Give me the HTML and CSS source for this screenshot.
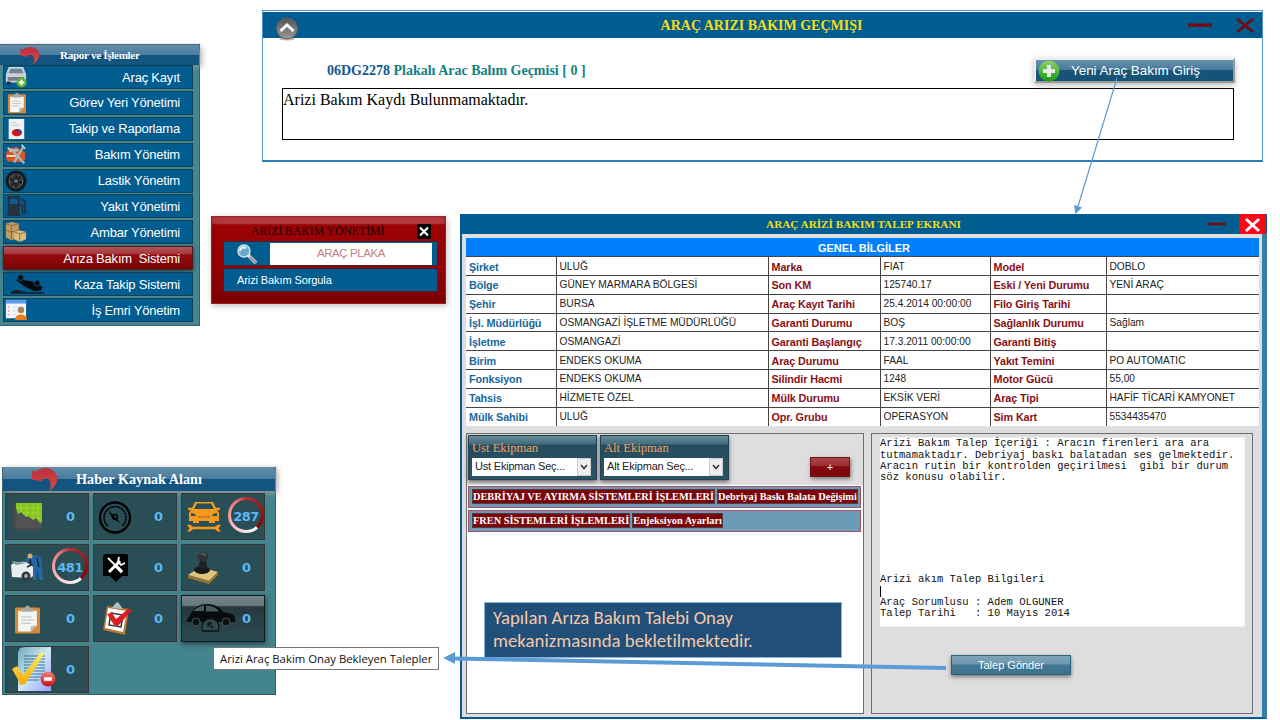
FILE: index.html
```html
<!DOCTYPE html>
<html lang="tr">
<head>
<meta charset="utf-8">
<title>Araç Arızi Bakım</title>
<link rel="stylesheet" href="styles.css">
</head>
<body>
<svg class="defs" width="0" height="0">
  <defs>
    <linearGradient id="back" x1="0" y1="0" x2="0" y2="1"><stop offset="0" stop-color="#b8303c"/><stop offset="1" stop-color="#e04848"/></linearGradient>
    <linearGradient id="gold" x1="0" y1="0" x2="0" y2="1"><stop offset="0" stop-color="#fff06a"/><stop offset="1" stop-color="#f5a800"/></linearGradient>
    <linearGradient id="doc" x1="0" y1="0" x2="1" y2="1"><stop offset="0" stop-color="#6fa6bd"/><stop offset=".5" stop-color="#cfe8f2"/><stop offset="1" stop-color="#9aa0ff"/></linearGradient>
    <linearGradient id="green" x1="0" y1="0" x2="0" y2="1"><stop offset="0" stop-color="#8fd070"/><stop offset="1" stop-color="#169c10"/></linearGradient>
    <linearGradient id="gray" x1="0" y1="0" x2="0" y2="1"><stop offset="0" stop-color="#555"/><stop offset="1" stop-color="#999"/></linearGradient>
    <linearGradient id="redball" x1="0" y1="0" x2="0" y2="1"><stop offset="0" stop-color="#f08080"/><stop offset="1" stop-color="#c80f14"/></linearGradient>
    <symbol id="undo" viewBox="0 0 25 22"><path d="M0 11V2l3 1.500C9-1 16-1 21 3c5 5 5 12-4 19 2-6 1-12-4-12-2 0-3 0-4 1l2 2z" fill="url(#back)"/></symbol>
    <symbol id="clip" viewBox="0 0 24 28"><rect x="0" y="3" width="24" height="25" rx="1.500" fill="#d58936"/><path d="M3 6h18v14l-6 6H3z" fill="#f5f5f3"/><path d="m21 20-6 6v-5z" fill="#bbb"/><path d="M6 12h10M6 15h12M6 18h9" stroke="#bbb"/><path d="M6 7V4h3q3-6 6 0h3v3z" fill="#aaa9a2"/></symbol>
  </defs>
</svg>

<nav class="menu">
  <header class="menu-head glass"><svg class="undo-s"><use href="#undo"/></svg><span>Rapor ve İşlemler</span></header>
  <ul class="menu-list">
    <li><svg class="mi" viewBox="0 0 24 24"><path d="m1 9 3-8h16l3 8v9H1z" fill="#c9d1d6"/><path d="m4 8 2-5h12l2 5z" fill="#71838e"/><path d="M3 12h18v4H3z" fill="#737e86"/><path d="M2 17h4v3H2z" fill="#222"/><circle cx="18" cy="18" r="5.500" fill="#5cb52a"/><path d="M18 15v6M15 18h6" stroke="#fff" stroke-width="2"/></svg><span>Araç Kayıt</span></li>
    <li><svg class="mi" viewBox="0 0 24 24"><use href="#clip" x="3" y="0" width="20" height="23.500"/></svg><span>Görev Yeri Yönetimi</span></li>
    <li><svg class="mi" viewBox="0 0 24 24"><path d="M4 1h17v22H4z" fill="#eef0f2"/><path d="M7 5h5M7 8h8" stroke="#c5c9cc"/><ellipse cx="13" cy="16" rx="5.500" ry="4" fill="#d3171f"/><path d="M13 16V12q5 0 5.500 4z" fill="#334c94"/></svg><span>Takip ve Raporlama</span></li>
    <li><svg class="mi" viewBox="0 0 24 24"><path d="m1 11 3-6 9-2 5 4 4 2v8l-6 3-13-1-2-4z" fill="#d9532c"/><path d="m5 9 1-3 7-1 3 3z" fill="#9ec2cd"/><path d="M2 13h10" stroke="#ffe0c0" stroke-width="2"/><path d="m6 5 15 16M20 3 10 20" stroke="#a9b6af" stroke-width="2.600"/><path d="m3 4 4 4M18 1l4 4" stroke="#c5ccc8" stroke-width="2"/></svg><span>Bakım Yönetim</span></li>
    <li><svg class="mi" viewBox="0 0 24 24"><circle cx="12" cy="12" r="11.500" fill="#181b1e"/><circle cx="12" cy="12" r="7.500" fill="#33383c" stroke="#646b70"/><path d="M12 5v14M5.500 10l13 4M7 17 17 7" stroke="#111" stroke-width="1.500"/><circle cx="12" cy="12" r="2" fill="#777"/></svg><span>Lastik Yönetim</span></li>
    <li><svg class="mi" viewBox="0 0 24 24"><path d="M3 1h13v20h1v2H2v-2h1z" fill="#25313b"/><path d="M5 4h9v6H5z" fill="#0b5b8d"/><path d="M16 11h3v8q2 3 3-1V8l-4-4" fill="none" stroke="#25313b" stroke-width="2"/></svg><span>Yakıt Yönetimi</span></li>
    <li><svg class="mi" viewBox="0 0 24 24"><path d="m1 3 6-2 8 2v15l-8 3-6-3z" fill="#c09a60"/><path d="m1 3 6 2 8-2M7 5v15M1 10l6 2 8-2" fill="none" stroke="#8d6b3b"/><path d="m10 12 6-2 7 2v8l-7 3-6-3z" fill="#dcba80"/><path d="m10 12 6 2 7-2M16 14v9" fill="none" stroke="#947040"/></svg><span>Ambar Yönetimi</span></li>
    <li class="active"><span>Arıza Bakım&nbsp; Sistemi</span></li>
    <li><svg class="mi wide" viewBox="0 0 40 24"><path d="m8 8 4-4 5 4 8 1 12 6-2 4-7 1-10-5z" fill="#07090b"/><circle cx="13" cy="5" r="3.300" fill="#07090b" stroke="#0b5b8d"/><circle cx="31" cy="11" r="3.300" fill="#07090b" stroke="#0b5b8d"/><path d="M2 21q7-5 12-1l7 1h18v1.500H2z" fill="#10202c"/></svg><span>Kaza Takip Sistemi</span></li>
    <li><svg class="mi" viewBox="0 0 24 24"><path d="M1 1h22v20H1z" fill="#f5f7fc"/><path d="M1 1h22v4H1z" fill="#5b9bea"/><path d="M4 8v12" stroke="#e6a6d0" stroke-width="2" stroke-dasharray="2 2"/><path d="M8 9h12M8 13h7M8 17h4" stroke="#d4d9e3"/><circle cx="17.500" cy="12" r="3.500" fill="#a98260"/><path d="M11 23q0-6 6.500-6t6.500 6z" fill="#ee7a1b"/></svg><span>İş Emri Yönetim</span></li>
  </ul>
</nav>

<section class="popup">
  <header class="popup-head"><h2>ARİZİ BAKIM YÖNETİMİ</h2><svg class="popup-x" viewBox="0 0 14 15"><rect width="14" height="15" fill="#000"/><path d="m3 3.500 8 8m0-8-8 8" stroke="#fff" stroke-width="2.200"/></svg></header>
  <div class="search"><svg class="lens" viewBox="0 0 22 20"><path d="m12 11 8 8" stroke="#d5d9d7" stroke-width="3.500"/><path d="m14 13 6 6" stroke="#687780" stroke-width="1.200"/><circle cx="8" cy="7" r="6" fill="#6ca7ca" stroke="#d7e5e8" stroke-width="1.500"/><path d="M4 7q1-5 6-3" fill="none" stroke="#e5fbff" stroke-width="2"/></svg><div class="plate">ARAÇ PLAKA</div></div>
  <div class="query">Arizi Bakım Sorgula</div>
</section>

<section class="news">
  <header class="news-head glass"><svg class="undo-l"><use href="#undo"/></svg><span>Haber Kaynak Alanı</span></header>
  <div class="tiles">
    <div class="tile"><svg class="ti" viewBox="0 0 44 43"><path d="M10 8h26v25H10z" fill="#86c41c"/><path d="M10 13h26M10 18h26M10 23h26M15 8v24M21 8v24M27 8v24M32 8v24" stroke="#a5dc48" stroke-width=".7"/><path d="m10 13 2 6 3-2 5 5 2-1 5 4 3-2 4 5 2-1v8H10z" fill="#505253"/><path d="M9 8v26h27M6 9h3M6 15h3M6 21h3M6 27h3M15 34v3M21 34v3M28 34v3" fill="none" stroke="#4a4a4b" stroke-width="2"/></svg><b>0</b></div>
    <div class="tile"><svg class="ti" viewBox="0 0 44 43"><circle cx="21" cy="22.500" r="15" fill="none" stroke="#000" stroke-width="2.400"/><path d="M14 31a11 11 0 1 1 14 0" fill="none" stroke="#000" stroke-width="1.600" stroke-dasharray="2.500 .5"/><circle cx="21" cy="22" r="2.500" fill="none" stroke="#000" stroke-width="1.300"/><path d="m14 15 13 13-8-4z" fill="#000"/></svg><b>0</b></div>
    <div class="tile"><svg class="ti" viewBox="0 0 44 43"><path d="m9 15 4-8h18l4 8 2 3v8h-4v2h-6v-2H17v2h-6v-2H7v-8z" fill="#f59a1d"/><path d="m12 14 3-5.500h14l3 5.500z" fill="#294f56"/><path d="M6 14h4M34 14h4" stroke="#f59a1d" stroke-width="2.500"/><path d="M9 18q4 0 5 3H9zM35 18q-4 0-5 3h5z" fill="#294f56"/><path d="M16 22h12" stroke="#a6651a"/><path d="M9 33h26" stroke="#f59a1d" stroke-width="2.500"/><path d="M5 29.500q6 0 6 3.500t-6 4l2.500-3.500zM39 29.500q-6 0-6 3.500t6 4l-2.500-3.500z" fill="#f59a1d"/></svg><div class="ring"><b>287</b></div></div>
    <div class="tile"><svg class="ti" viewBox="0 0 44 43"><path d="M5 19q5-4 15-3l9 6v7l-5 3-18-1z" fill="#e9edf0"/><path d="m5 15 5 4 11-2-7-1z" fill="#839aa5"/><circle cx="20" cy="30" r="4.500" fill="#30373c"/><circle cx="20" cy="30" r="2" fill="#aaa"/><path d="m19 13 6-3 5-1 5 3 1 9 1 13h-3l-3-10-1 10h-3V21l-1-6-6 1z" fill="#2267a6"/><circle cx="24" cy="10" r="2.500" fill="#d5aa79"/><path d="m24 13 1 6-4 2M31 12l2 9" fill="none" stroke="#17283c" stroke-width="1.500"/></svg><div class="ring"><b>481</b></div></div>
    <div class="tile"><svg class="ti" viewBox="0 0 44 43"><path d="M11 8h21q2 0 2 2v20h-6l-6 6-6-6H9V10z" fill="#000"/><path d="m14 12 14 14" stroke="#fff" stroke-width="1.800"/><path d="m22 20 6 6" stroke="#fff" stroke-width="3.200"/><path d="M26 15 15 26" stroke="#fff" stroke-width="3"/><path d="m25 11-1 5 3 3 4-2" stroke="#fff" stroke-width="1.800" fill="none"/></svg><b>0</b></div>
    <div class="tile"><svg class="ti" viewBox="0 0 44 43"><path d="m6 29 12-8 18 5-9 9z" fill="#dec37d"/><path d="m6 29 21 6v3L6 32zM27 35l9-9v3l-9 9z" fill="#9a7431"/><ellipse cx="20" cy="24" rx="8" ry="4" fill="#171b1d"/><path d="m16 22 3-10h5l1 11z" fill="#222"/><ellipse cx="21" cy="11" rx="5.500" ry="4.500" fill="#303436"/><path d="M19 8q4-1 5 2" stroke="#788086" fill="none"/></svg><b>0</b></div>
    <div class="tile"><svg class="ti" viewBox="0 0 44 43"><use href="#clip" x="9" y="7" width="25" height="30"/></svg><b>0</b></div>
    <div class="tile"><svg class="ti" viewBox="0 0 44 43"><path d="m13 9 22 3-4 26-22-5z" fill="#b87837"/><path d="m14 11 19 3-4 21-18-4z" fill="#fff"/><path d="m17 16 12 2-2 12-12-2z" fill="none" stroke="#333" stroke-width="1.500"/><path d="m18 11 3-4q3-4 5 1l3 4z" fill="#b7bec1"/><path d="m13 17 5-1 4 6 12-10 4 1-14 16-4-1z" fill="#db1c22"/></svg><b>0</b></div>
    <div class="tile hover"><svg class="car" viewBox="0 0 52 32"><path d="m1 17 4-7q5-9 16-9 11 0 16 8l9 2q4 2 3 8h-4q-5-6-10 0H15q-4-6-9 0H1z" fill="#080c0e"/><path d="m7 8q5-5 11-5.500V8zm13-5.500q9 0 13 6H20z" fill="#4b5c60"/><circle cx="10" cy="19" r="4" fill="#0c1112" stroke="#445457"/><circle cx="40" cy="19" r="4" fill="#0c1112" stroke="#445457"/><path d="M17 28a8.500 8.500 0 1 1 15 0z" fill="#304b50" stroke="#0b1113" stroke-width="1.300"/><path d="m22 20 5 5m-5-5h4m-4 0v4" stroke="#0b1113" stroke-width="1.300"/></svg><b>0</b></div>
    <div class="tile"><svg class="check" viewBox="0 0 46 45"><path d="m14 1 5-1h26v44H12V5z" fill="url(#doc)"/><path d="M18 9h21M18 12h21M18 15h21M18 18h21M18 21h21M18 24h21M18 27h21M18 30h17M18 33h15" stroke="#35749c"/><path d="m6 22 5-3 6 9L35 5l3 2-19 30-4 1z" fill="url(#gold)"/><circle cx="42" cy="32" r="7.500" fill="url(#redball)"/><path d="M38 32h8" stroke="#fff" stroke-width="3.500"/></svg><b>0</b></div>
  </div>
</section>

<section class="history">
  <header class="history-head">
    <svg class="up" viewBox="0 0 24 24"><ellipse cx="12" cy="22" rx="8" ry="1.500" fill="#bbb"/><circle cx="12" cy="11.500" r="10.500" fill="url(#gray)" stroke="#626262"/><path d="m5.500 14 6.500-6 6.500 6" fill="none" stroke="#fff" stroke-width="3"/></svg>
    <h1>ARAÇ ARIZI BAKIM GEÇMIŞI</h1>
    <svg class="hwin" viewBox="0 0 70 20"><path d="M2 10h24" stroke="#7c0505" stroke-width="3"/><path d="m51 4 16 13m0-13L51 17" stroke="#7c0505" stroke-width="2.500"/></svg>
  </header>
  <div class="history-bar"><p><span class="plate-no">06DG2278</span> Plakalı Arac Balım Geçmisi [ 0 ]</p>
    <button class="new-btn"><svg viewBox="0 0 22 22"><circle cx="11" cy="11" r="10.500" fill="url(#green)"/><path d="M11 5v12M5 11h12" stroke="#e8ece6" stroke-width="4"/></svg><span>Yeni Araç Bakım Giriş</span></button></div>
  <div class="record">Arizi Bakım Kaydı Bulunmamaktadır.</div>
</section>

<section class="request">
  <header class="request-head"><h1>ARAÇ ARİZİ BAKIM TALEP EKRANI</h1>
    <svg class="rmin" viewBox="0 0 20 4"><path d="M1 2h18" stroke="#780909" stroke-width="2.500"/></svg>
    <svg class="rclose" viewBox="0 0 27 20"><rect width="27" height="20" fill="#fb0716"/><path d="m7 5 13 12m0-12L7 17" stroke="#fff" stroke-width="3"/></svg></header>
  <div class="request-body">
    <table class="info">
      <colgroup><col class="c1"><col class="c2"><col class="c3"><col class="c4"><col class="c5"><col class="c6"></colgroup>
      <tr class="cap"><th colspan="6">GENEL BİLGİLER</th></tr>
      <tr><th>Şirket</th><td>ULUĞ</td><th>Marka</th><td>FIAT</td><th>Model</th><td>DOBLO</td></tr>
      <tr><th>Bölge</th><td>GÜNEY MARMARA BÖLGESİ</td><th>Son KM</th><td>125740.17</td><th>Eski / Yeni Durumu</th><td>YENİ ARAÇ</td></tr>
      <tr><th>Şehir</th><td>BURSA</td><th>Araç Kayıt Tarihi</th><td>25.4.2014 00:00:00</td><th>Filo Giriş Tarihi</th><td></td></tr>
      <tr><th>İşl. Müdürlüğü</th><td>OSMANGAZİ İŞLETME MÜDÜRLÜĞÜ</td><th>Garanti Durumu</th><td>BOŞ</td><th>Sağlanlık Durumu</th><td>Sağlam</td></tr>
      <tr><th>İşletme</th><td>OSMANGAZİ</td><th>Garanti Başlangıç</th><td>17.3.2011 00:00:00</td><th>Garanti Bitiş</th><td></td></tr>
      <tr><th>Birim</th><td>ENDEKS OKUMA</td><th>Araç Durumu</th><td>FAAL</td><th>Yakıt Temini</th><td>PO AUTOMATIC</td></tr>
      <tr><th>Fonksiyon</th><td>ENDEKS OKUMA</td><th>Silindir Hacmi</th><td>1248</td><th>Motor Gücü</th><td>55,00</td></tr>
      <tr><th>Tahsis</th><td>HİZMETE ÖZEL</td><th>Mülk Durumu</th><td>EKSİK VERİ</td><th>Araç Tipi</th><td>HAFİF TİCARİ KAMYONET</td></tr>
      <tr><th>Mülk Sahibi</th><td>ULUĞ</td><th>Opr. Grubu</th><td>OPERASYON</td><th>Sim Kart</th><td>5534435470</td></tr>
    </table>
    <div class="panes">
      <div class="equip">
        <div class="pickers">
          <div class="picker"><label>Ust Ekipman</label><div class="select"><span>Ust Ekipman Seç...</span><i><svg viewBox="0 0 8 6"><path d="m1 1 3 3.500L7 1" fill="none" stroke="#333" stroke-width="1.500"/></svg></i></div></div>
          <div class="picker"><label>Alt Ekipman</label><div class="select"><span>Alt Ekipman Seç...</span><i><svg viewBox="0 0 8 6"><path d="m1 1 3 3.500L7 1" fill="none" stroke="#333" stroke-width="1.500"/></svg></i></div></div>
          <button class="add">+</button>
        </div>
        <div class="jobs">
          <div class="job"><b>DEBRİYAJ VE AYIRMA SİSTEMLERİ İŞLEMLERİ</b><b>Debriyaj Baskı Balata Değişimi</b></div>
          <div class="job"><b>FREN SİSTEMLERİ İŞLEMLERİ</b><b>Enjeksiyon Ayarları</b></div>
        </div>
        <div class="note">Yapılan Arıza Bakım Talebi Onay<br>mekanizmasında bekletilmektedir.</div>
      </div>
      <div class="detail">
        <pre class="memo">Arizi Bakım Talep İçeriği : Aracın firenleri ara ara
tutmamaktadır. Debriyaj baskı balatadan ses gelmektedir.
Aracın rutin bir kontrolden geçirilmesi  gibi bir durum
söz konusu olabilir.








Arizi akım Talep Bilgileri
<span class="caret"></span>
Araç Sorumlusu : Adem OLGUNER
Talep Tarihi   : 10 Mayıs 2014</pre>
        <button class="send">Talep Gönder</button>
      </div>
    </div>
  </div>
</section>

<div class="tooltip">Arizi Araç Bakim Onay Bekleyen Talepler</div>
<svg class="arrows" viewBox="0 0 1280 720"><path d="M1117 78 1077.500 208" stroke="#5b9bd5" stroke-width="1.200"/><path d="m1074 205 8 2.500-6.500 6.500z" fill="#5b9bd5"/><path d="M946 668 453 658.500" stroke="#5b9bd5" stroke-width="4"/><path d="m443 658 12-6v12z" fill="#5b9bd5"/></svg>
</body>
</html>
```
FILE: styles.css
```css
* { box-sizing: border-box; }
body { margin: 0; width: 1280px; height: 720px; position: relative; overflow: hidden; background: #fff; font-family: "Liberation Sans", Arial, sans-serif; }
h1, h2, p, ul, pre { margin: 0; padding: 0; }
button { font-family: inherit; padding: 0; }
svg { display: block; flex: none; }
.defs { position: absolute; }
.glass { background: linear-gradient(#638eab 0, #4a7c9e 48%, #13537f 50%, #145580 100%); box-shadow: 2px 2px 6px #999; }

/* left menu */
.menu { position: absolute; left: 0; top: 44px; width: 200px; height: 282px; background: #44858e; border: 1px solid #365f6a; border-left: 0; }
.menu-head { height: 20px; display: flex; align-items: center; color: #fff; font: bold 11.200px "Liberation Serif", serif; letter-spacing: -.38px; padding-left: 20px; }
.menu-head span { letter-spacing: -.35px; }
.undo-s { width: 20px; height: 17px; margin-right: 20px; }
.menu-list { list-style: none; padding: 0 6px 0 3px; display: grid; gap: 1.9px; }
.menu-list li { height: 24px; display: flex; align-items: center; background: #015c90; border: 1px solid #133f58; color: #fff; font-size: 13px; padding-right: 12px; letter-spacing: -.2px; }
.menu-list span { margin-left: auto; }
.mi { width: 24px; height: 22px; }
.mi.wide { width: 40px; margin-left: 3px; }
.menu-list .active { background: linear-gradient(#b0555a 0, #a5373b 32%, #940b0e 35%, #7b0506 100%); border-color: #4a1c20; box-shadow: 0 1px 4px #234; }

/* query popup */
.popup { position: absolute; left: 211px; top: 216px; width: 235px; height: 88px; padding: 8px 7px 0 11px; border: 1px solid #a02020; background: linear-gradient(#b94b4e 0, #b23538 8%, #9c0306 9%, #970004 60%, #7c0001 100%); box-shadow: inset 0 0 6px #7008, 1px 2px 6px #8888; }
.popup-head { display: flex; height: 16px; justify-content: space-between; padding: 0 7px 0 28px; }
.popup-head h2 { font: 11.700px/13px "Liberation Serif", serif; color: #150000; white-space: nowrap; }
.popup-x { width: 14px; height: 15px; margin-top: -1px; }
.search { height: 25px; background: #015c90; border: 1px solid #42252f; display: flex; align-items: center; padding: 0 5px 0 12px; }
.lens { width: 22px; height: 20px; margin-right: 12px; }
.plate { flex: 1; height: 22px; background: #fff; color: #c57e81; font-size: 11.500px; line-height: 21px; text-align: center; letter-spacing: -.4px; }
.query { height: 24px; margin-top: 2px; background: #015c90; border: 1px solid #42252f; color: #fff; font-size: 11px; line-height: 22px; padding-left: 13px; letter-spacing: -.1px; }

/* news tiles */
.news { position: absolute; left: 2px; top: 467px; width: 274px; height: 228px; background: #44848d; border: 1px solid #365a63; border-top: 0; }
.news-head { height: 24px; display: flex; align-items: center; color: #fff; font: bold 14.200px "Liberation Serif", serif; padding-left: 29px; }
.undo-l { width: 26px; height: 23px; margin-right: 18px; }
.tiles { display: grid; grid-template-columns: repeat(3, 84px); grid-auto-rows: 47px; gap: 4px; padding: 2px 0 0 2px; }
.tile { background: #294e55; border: 1px solid #3b3538; display: flex; align-items: center; color: #5cb8f4; font: bold 13px "DejaVu Sans", sans-serif; }
.tile > b { margin-left: auto; margin-right: 13px; }
.ti { width: 44px; height: 43px; }
.ring { width: 36px; height: 36px; margin: 0 0 3px 2px; border-radius: 50%; background: conic-gradient(#ba2d36, #8b0509 33%, #8b0509 38%, #fff 39%, #fbdddd 53%, #f49b9d 75%, #e67377 90%, #ba2d36); position: relative; display: grid; place-items: center; isolation: isolate; letter-spacing: -.5px; }
.ring::before { content: ""; position: absolute; inset: 3px; border-radius: 50%; background: #294e55; z-index: -1; }
.ring b { padding-top: 2px; }
.hover { background: linear-gradient(#75868a 0, #65777b 21%, #26383d 24%, #2a4b52 100%); border: 1px solid #101d20; box-shadow: 1px 2px 5px #223b; }
.car { width: 52px; height: 32px; margin-left: 4px; }
.check { width: 46px; height: 45px; overflow: visible; }

/* history window */
.history { position: absolute; left: 262px; top: 10px; width: 1001px; height: 152px; border: 1px solid #5292c6; border-bottom: 2px solid #2d7bb0; background: #fff; padding-top: 1px; }
.history-head { height: 26px; background: #015c90; display: flex; align-items: flex-start; justify-content: space-between; padding: 0 6px 0 12px; }
.up { width: 24px; height: 24px; margin-top: 5px; }
.history-head h1 { font: bold 14px/28px "Liberation Serif", serif; color: #f7dc15; margin-left: 38px; }
.hwin { width: 70px; height: 20px; margin-top: 3px; }
.history-bar { height: 50px; display: flex; justify-content: space-between; padding: 20px 27px 0 64px; }
.history-bar p { font: bold 14px/26px "Liberation Serif", serif; color: #118082; }
.plate-no { color: #10588f; }
.new-btn { width: 201px; height: 25px; border: 2px outset #eee; background: linear-gradient(#6791ac 0, #48799b 47%, #17567c 49%, #155173 100%); color: #fff; font-size: 13.400px; display: flex; align-items: center; box-shadow: 0 2px 6px #8889; }
.new-btn svg { width: 22px; height: 22px; margin-right: 11px; margin-left: 2px; }
.record { margin: 0 28px 0 19px; height: 52px; border: 1px solid #000; font: 16px/22px "Liberation Serif", serif; }

/* request window */
.request { position: absolute; left: 460px; top: 214px; width: 807px; height: 505px; background: #dedede; border: 1px solid #075b91; border-width: 0 5px 2px 2px; border-right-color: #357fa9; }
.request-head { height: 20px; margin: 0 -5px 0 -2px; background: #015c90; display: flex; align-items: center; }
.request-head h1 { flex: 1; text-align: center; font: bold 11.200px/20px "Liberation Serif", serif; color: #f7dc15; padding-left: 60px; }
.rmin { width: 20px; height: 4px; margin-right: 12px; }
.rclose { width: 27px; height: 20px; margin-right: 1px; }
.request-body { padding: 4px 3px 0 4px; }
.info { width: 793px; table-layout: fixed; border-collapse: collapse; background: #fff; font-size: 10.200px; color: #222; }
.c1 { width: 90px; } .c2 { width: 212px; } .c3 { width: 112px; } .c4 { width: 110px; } .c5 { width: 116px; } .c6 { width: 153px; }
.info tr { height: 18.800px; }
.info td, .info th { padding: 1px 0 0 3px; line-height: 16px; text-align: left; border: 1px solid #444; border-width: 1px 0 0 1px; white-space: nowrap; }
.info tr > :first-child { border-left: 0; }
.info th { color: #8a1014; font-size: 10.800px; letter-spacing: -.1px; }
.info th:first-child { color: #17689d; }
.info .cap th { background: #027ffd; color: #fff; text-align: center; border: 0; font-size: 11px; letter-spacing: 0; }
.panes { display: grid; grid-template-columns: 398px 382px; gap: 7px; padding-top: 7px; }
.equip { height: 281px; border: 1px solid #6d6d6d; box-shadow: inset 1px 1px #fff; background: #fff; display: flex; flex-direction: column; }
.pickers { display: flex; height: 51px; background: #dedede; padding: 1px; }
.picker { width: 129px; height: 45px; margin-right: 3px; padding: 4px 5px 0 3px; border: 1px solid #24424f; background: linear-gradient(#688b99 0, #416c7e 19%, #244d60 21%, #2a5263 100%); box-shadow: 0 2px 4px #666; }
.picker label { display: block; height: 18px; color: #f0a060; font: 12.600px/16px "Liberation Serif", serif; }
.select { width: 119px; height: 18px; background: #fff; display: flex; font-size: 11px; color: #222; line-height: 16px; padding-left: 3px; letter-spacing: -.2px; }
.select span { flex: 1; white-space: nowrap; }
.select i { width: 14px; background: #eee; border: 1px solid #ccc; display: grid; place-items: center; }
.select svg { width: 8px; height: 6px; }
.add { width: 40px; height: 20px; margin: 22px 0 0 78px; border: 1px solid #701419; color: #fff; font-size: 11px; background: linear-gradient(#a94448, #9c3034 42%, #85090c 48%, #7c0808); box-shadow: 1px 2px 4px #777; }
.jobs { display: grid; grid-template-columns: minmax(0, 1fr); gap: 2px; padding: 1px 2px 1px 1px; }
.job { height: 22px; border: 1px solid #a35261; background: #6c9bb7; display: flex; align-items: center; gap: 2px; padding: 0 3px; }
.job b { height: 15px; background: #7b0508; border: 1px solid #523b45; color: #fff; font: bold 10.350px/13px "Liberation Serif", serif; white-space: nowrap; }
.note { margin: 69px 0 0 17px; width: 358px; height: 56px; background: #204f79; border: 1px solid #89b3d9; color: #f5c9a7; font: 18.800px/23px Carlito, Lato, sans-serif; font-variant-ligatures: none; padding: 3px 0 0 8px; white-space: nowrap; }
.detail { height: 281px; border: 1px solid #6d6d6d; padding: 3px 7px 0 8px; }
.memo { height: 190px; background: #fff; border: 1px solid #eee; border-left: 0; font: 10.550px/11.330px "Liberation Mono", monospace; color: #111; padding-top: .5px; }
.caret { display: inline-block; width: 1px; height: 11px; background: #000; vertical-align: top; }
.send { width: 120px; height: 20px; display: block; margin: 28px 0 0 71px; border: 1px solid #28627d; background: linear-gradient(#7fa5b9 0, #6c98b0 45%, #427893 49%, #3e738e 100%); color: #fff; font-size: 11px; box-shadow: 0 2px 4px #777; }

/* annotations */
.tooltip { position: absolute; left: 213px; top: 647px; width: 226px; height: 23px; border: 1px solid #777; background: #fff; font: 11.350px/22px "Open Sans", "Noto Sans", sans-serif; color: #111; padding-left: 6px; white-space: nowrap; }
.arrows { position: absolute; inset: 0; width: 1280px; height: 720px; pointer-events: none; }
```
